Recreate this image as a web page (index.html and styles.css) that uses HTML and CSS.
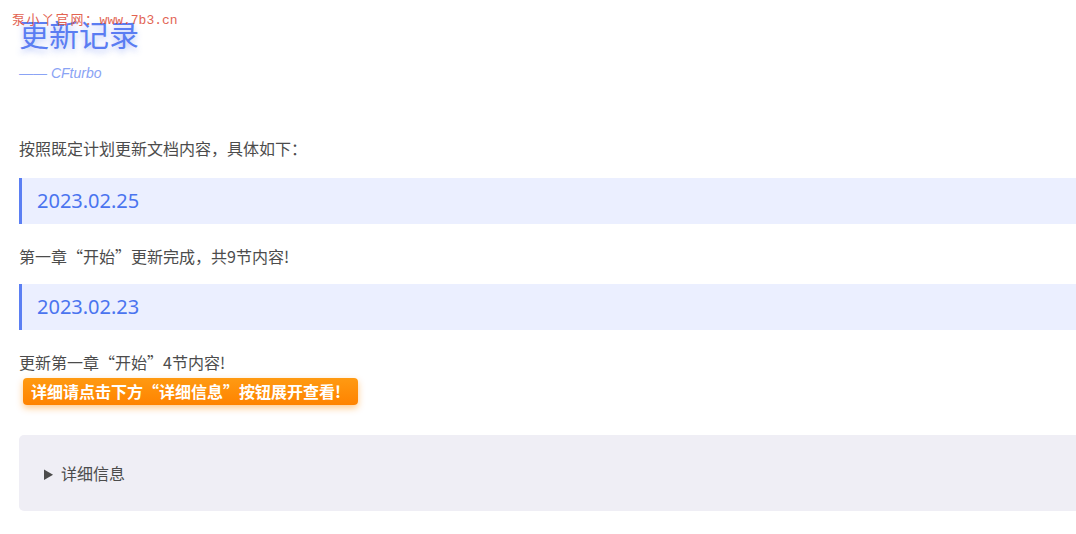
FILE: index.html
```html
<!DOCTYPE html>
<html lang="zh-CN">
<head>
    <meta charset="UTF-8">
    <meta name="viewport" content="width=device-width, initial-scale=1.0">
    <title>更新记录</title>
    <link rel="stylesheet" href="styles.css">
</head>
<body>
    <div class="watermark"><span class="wm-cn">泵小丫官网：</span>www.7b3.cn</div>

    <div class="page">
        <div class="header">
            <h1 class="title">更新记录</h1>
            <p class="subtitle">—— CFturbo</p>
        </div>

        <p class="text intro">按照既定计划更新文档内容，具体如下：</p>

        <h2 class="date">2023.02.25</h2>
        <p class="text">第一章“开始”更新完成，共9节内容!</p>

        <h2 class="date">2023.02.23</h2>
        <p class="text">更新第一章“开始”4节内容!</p>
        <span class="badge">详细请点击下方“详细信息”按钮展开查看!</span>

        <details class="more">
            <summary>详细信息</summary>
        </details>
    </div>
</body>
</html>
```

FILE: styles.css
```css
body {
    margin: 0;
    padding: 0;
    font-family: "Noto Sans CJK SC", "Liberation Sans", sans-serif;
    color: #4c4c4c;
    background: #fff;
    overflow: hidden;
}
.watermark {
    position: absolute;
    left: 12px;
    top: 9px;
    font-family: "Liberation Mono", "Noto Sans CJK SC", monospace;
    font-size: 13px;
    color: #e0533f;
    opacity: 0.9;
    z-index: 2;
}
.wm-cn {
    letter-spacing: 1.6px;
}
.page {
    width: 1100px;
    padding: 12px 0 0 19px;
}
.header {
    margin-bottom: 54px;
}
.title {
    margin: 0;
    font-size: 30px;
    font-weight: normal;
    line-height: 42px;
    color: #5a7df2;
    text-shadow: 0 3px 6px rgba(90, 125, 242, 0.45);
}
.subtitle {
    margin: 11px 0 0;
    font-family: "Liberation Sans", sans-serif;
    font-size: 14px;
    font-style: italic;
    color: #8aa3f5;
}
.text {
    margin: 0;
    font-size: 16px;
    line-height: 26px;
}
.intro {
    margin-bottom: 17px;
}
.date {
    margin: 0 0 19px;
    padding: 0 0 0 15px;
    height: 46px;
    line-height: 46px;
    border-left: 3px solid #5b7ff3;
    background: #ebefff;
    font-family: "Noto Sans", "Liberation Sans", sans-serif;
    font-size: 20px;
    font-weight: normal;
    color: #4a74ef;
}
.text + .date {
    margin-top: 15px;
}
.badge {
    display: inline-block;
    margin: 3px 0 0 4px;
    padding: 0 17px 0 8px;
    height: 27px;
    line-height: 27px;
    font-size: 16px;
    font-weight: bold;
    color: #fff;
    background: linear-gradient(#ff9a12, #ff8300);
    border-radius: 4px;
    box-shadow: 0 3px 7px rgba(255, 140, 0, 0.45);
}
.more {
    margin-top: 30px;
    height: 76px;
    background: #efeef5;
    border-radius: 5px;
    box-sizing: border-box;
    padding: 25px 0 0 25px;
}
.more summary {
    font-size: 16px;
    line-height: 26px;
    color: #4c4c4c;
    cursor: pointer;
}
```
